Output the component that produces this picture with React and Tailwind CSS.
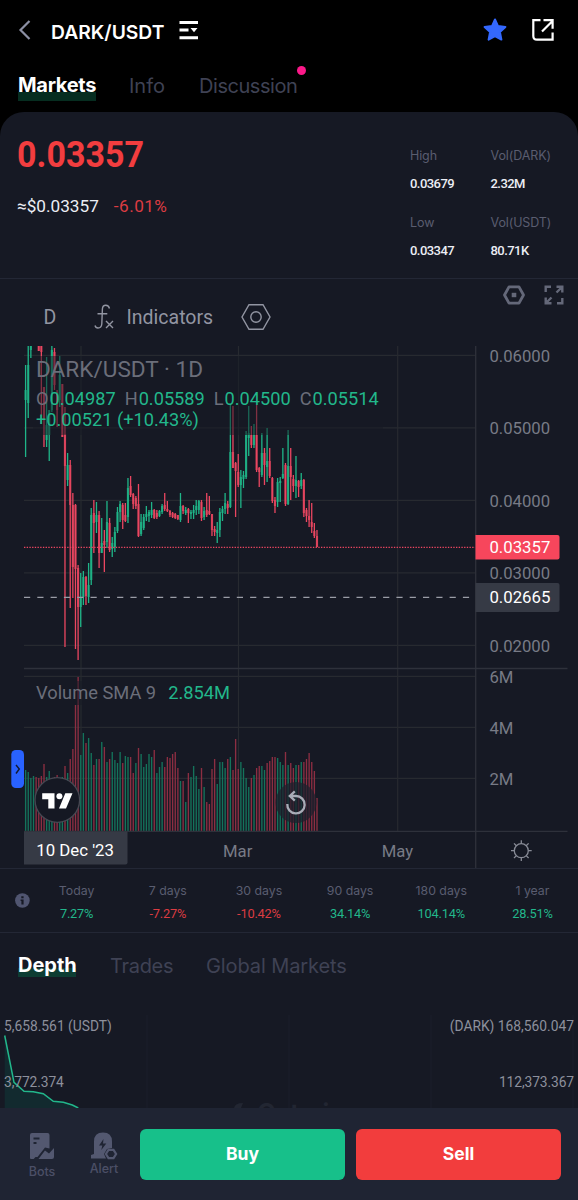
const UP = "#1fb588"
const DOWN = "#ea4660"

// [direction, high, low, body top, body bottom]
const candles = [
  ["u", 365, 457, 390, 400], ["u", 346, 418, 365, 403], ["u", 346, 358, 346, 350], null, null,
  ["d", 346, 351, 346, 351], ["d", 346, 424, 346, 352], ["d", 387, 447, 387, 420], ["u", 357, 447, 425, 440],
  ["u", 410, 461, 410, 435], ["u", 346, 412, 350, 410], ["d", 348, 390, 352, 385], ["d", 390, 427, 392, 410],
  ["u", 356, 407, 375, 400], ["d", 384, 437, 384, 437], ["d", 407, 647, 434, 466], ["u", 453, 486, 465, 480],
  ["d", 460, 608, 465, 505], ["d", 493, 598, 505, 567], ["d", 504, 649, 505, 569], ["d", 565, 660, 568, 607],
  ["u", 573, 627, 597, 607], ["u", 571, 605, 577, 597], ["d", 576, 605, 577, 596], ["u", 563, 603, 585, 597],
  ["u", 508, 585, 515, 580], ["d", 500, 553, 513, 523], ["u", 502, 533, 515, 522], ["d", 511, 568, 515, 553],
  ["u", 518, 553, 543, 553], ["d", 530, 572, 541, 545], ["u", 501, 548, 522, 542], ["d", 518, 552, 523, 550],
  ["u", 537, 557, 543, 549], ["u", 527, 552, 532, 547], ["u", 507, 533, 512, 531], ["u", 501, 522, 504, 512],
  ["d", 503, 529, 505, 520], ["d", 503, 522, 515, 521], ["u", 478, 523, 488, 517], ["d", 476, 497, 486, 495],
  ["d", 493, 509, 494, 504], ["d", 496, 509, 498, 506], ["d", 484, 537, 504, 536], ["u", 514, 536, 522, 534],
  ["u", 514, 530, 517, 528], ["u", 506, 521, 514, 517], ["u", 510, 522, 512, 516], ["u", 502, 518, 510, 515],
  ["d", 509, 519, 510, 518], ["d", 510, 519, 513, 517], ["u", 510, 517, 511, 516], ["u", 504, 514, 506, 512],
  ["d", 493, 511, 505, 509], ["d", 501, 512, 509, 511], ["d", 510, 517, 511, 515], ["d", 512, 518, 513, 517],
  ["d", 513, 519, 514, 518], ["d", 515, 520, 515, 519], ["u", 493, 522, 506, 520], ["d", 505, 514, 506, 511],
  ["u", 507, 515, 510, 513], ["d", 508, 523, 509, 513], ["u", 510, 519, 512, 514], ["u", 505, 519, 510, 513],
  ["u", 500, 515, 506, 510], ["u", 500, 514, 501, 510], ["d", 500, 521, 502, 518], ["u", 507, 520, 511, 517],
  ["d", 493, 517, 510, 515], ["d", 496, 515, 511, 514], ["d", 514, 536, 514, 530], ["d", 526, 536, 529, 532],
  ["u", 522, 543, 530, 533], ["u", 508, 537, 512, 530], ["u", 506, 521, 509, 513], ["u", 493, 514, 503, 509],
  ["d", 501, 514, 504, 508], ["u", 405, 508, 452, 507], ["d", 406, 468, 452, 468], ["d", 462, 517, 463, 471],
  ["d", 454, 487, 472, 485], ["u", 470, 508, 477, 485], ["u", 471, 488, 475, 479], ["u", 431, 479, 435, 477],
  ["u", 406, 456, 433, 438], ["d", 426, 448, 435, 445], ["u", 424, 448, 435, 445], ["d", 405, 472, 435, 470],
  ["d", 467, 487, 468, 472], ["u", 433, 477, 453, 475], ["d", 448, 485, 453, 465], ["u", 428, 482, 461, 467],
  ["d", 448, 478, 461, 476], ["d", 477, 503, 478, 501], ["d", 497, 513, 500, 506], ["u", 478, 507, 482, 502],
  ["u", 477, 502, 481, 483], ["u", 448, 479, 474, 478], ["d", 463, 506, 465, 504], ["u", 430, 505, 466, 504],
  ["d", 448, 500, 466, 477], ["d", 475, 492, 479, 486], ["u", 456, 498, 480, 486], ["d", 480, 497, 481, 487],
  ["u", 473, 489, 480, 486], ["d", 479, 517, 480, 513], ["d", 508, 522, 510, 516], ["d", 500, 527, 516, 520],
  ["d", 503, 533, 522, 527], ["d", 523, 538, 531, 536], ["d", 530, 547, 536, 547],
]

// direction and bar height in pixels
const volumes =
  "u61 u59 u53 u55 d54 d53 d55 d67 u54 u60 u53 d54 d56 u53 u54 d65 u58 d72 d82 d126 d154 u76 u98 d88 u93 u78 d66 u72 d72 u89 d84 u69 d72 u79 u71 u68 u79 d68 u75 u74 d74 d58 u68 d83 u77 u64 u67 u77 u74 d81 u58 u64 u69 d64 d74 d73 d77 d79 d63 u50 d50 u29 d58 u54 u65 u55 u42 d63 u44 d29 d27 d62 d72 u47 u69 u69 u63 d72 u74 d61 d92 d62 u69 u63 u53 u44 d53 u56 d63 d65 u65 u61 d68 d70 d74 d74 u73 u69 u66 d79 u66 d68 d63 u66 d66 u69 d69 d72 d78 d69 d60 d33"
    .split(" ")
    .map((v) => ({ dir: v[0], h: Number(v.slice(1)) }))

const candleX = (i) => 25.6 + i * 2.625

const priceLabels = [
  ["0.06000", 355.5],
  ["0.05000", 428],
  ["0.04000", 500.5],
  ["0.03000", 573],
  ["0.02000", 645.5],
]
const volumeLabels = [
  ["6M", 676.5],
  ["4M", 727.5],
  ["2M", 778.5],
]

const stats = [
  ["High", "0.03679"],
  ["Vol(DARK)", "2.32M"],
  ["Low", "0.03347"],
  ["Vol(USDT)", "80.71K"],
]

const periods = [
  ["Today", "7.27%"],
  ["7 days", "-7.27%"],
  ["30 days", "-10.42%"],
  ["90 days", "34.14%"],
  ["180 days", "104.14%"],
  ["1 year", "28.51%"],
]

function Header() {
  return (
    <header className="flex h-[60px] items-center pt-[4px] pl-[18px] pr-[22px]">
      <svg width="14" height="22" viewBox="0 0 14 22" fill="none" className="-mt-1">
        <path d="M11.5 2 2.5 11l9 9" stroke="#8b8fa3" strokeWidth="2.2" />
      </svg>
      <h1 className="ml-[19px] w-[114px] whitespace-nowrap text-[19.3px] font-semibold text-white">DARK/USDT</h1>
      <svg width="20" height="20" viewBox="0 0 20 20" fill="#fff" className="ml-[14px] -mt-1">
        <path d="M.5 1H19v3H.5zM.5 8.6h9v3h-9zM.5 16.2H19v3H.5zM11.5 8h7L15 12.2z" />
      </svg>
      <svg width="26" height="26" viewBox="0 0 26 26" className="ml-auto -mt-1">
        <path
          d="m13 2.5 3 6.6 7.4.9-5.5 5 1.5 7.6L13 19.1l-6.4 3.5L8.1 15 2.6 10l7.4-.9z"
          fill="#3468fd"
          stroke="#3468fd"
          strokeWidth="2"
          strokeLinejoin="round"
        />
      </svg>
      <svg width="24" height="24" viewBox="0 0 24 24" fill="none" stroke="#fff" strokeWidth="2.2" className="ml-[23px] mr-px -mt-1">
        <path d="M9.5 2.2H2.3V18q0 3.700 3.700 3.700h15.600V14.500M11 13.500 21 3.500M12.500 2.200h9.100v8.600" />
      </svg>
    </header>
  )
}

function TopTabs() {
  return (
    <nav className="flex h-[52px] items-center pl-[18px] text-[20px] whitespace-nowrap">
      <span className="h-[30px] w-[78px] bg-[linear-gradient(transparent_21px,#062d20_21px)] leading-[28px] font-bold tracking-[-0.3px] text-white">
        Markets
      </span>
      <span className="ml-[33px] w-9 text-[#3f4254]">Info</span>
      <span className="relative ml-[34px] tracking-[-0.45px] text-[#3f4254]">
        Discussion
        <i className="absolute -right-[9px] -top-[5px] size-[9px] rounded-full bg-[#fb1989]" />
      </span>
    </nav>
  )
}

function PriceSummary() {
  return (
    <section className="flex h-[167px] justify-between border-b border-[#232735] pl-[17px]">
      <div className="pt-[22px] font-[Roboto]">
        <div className="w-fit origin-left scale-x-[0.92] text-[37px] font-bold leading-[42px] text-[#f23d3f]">0.03357</div>
        <div className="mt-[19px] flex gap-[15px] text-[17.2px] leading-[22px]">
          <span className="text-[#eceef5]">≈$0.03357</span>
          <span className="tracking-[0.45px] text-[#dc3c42]">-6.01%</span>
        </div>
      </div>
      <div className="grid h-[130px] w-[168px] grid-cols-[80.5px_87.5px] gap-y-[11px] pt-[34px]">
        {stats.map(([label, value]) => (
          <div key={label} className="h-[56px]">
            <div className="text-[12.5px] leading-[20px] tracking-[-0.1px] text-[#5a5d70]">{label}</div>
            <div className="mt-2 font-[Roboto] text-[13px] leading-[20px] font-medium tracking-[-0.55px] text-[#eceef5]">{value}</div>
          </div>
        ))}
      </div>
    </section>
  )
}

function ChartToolbar() {
  return (
    <div className="flex h-[67px] items-start pl-[43.5px] pr-[14px] font-[Roboto] text-[19.5px] text-[#9295a2]">
      <span className="mt-[27px] w-[50px] leading-[24px]">D</span>
      <svg width="22" height="28" viewBox="0 0 22 28" fill="none" stroke="#9295a2" strokeWidth="1.4" className="mt-[25px]">
        <path d="M15.5 4.5Q14.8 1.2 11.8 1.2 8.6 1.2 8.4 5L7.8 20Q7.4 24 4 24 1.6 24 1 21.5M3.5 9.8h9.8M12 17l7 7M19 17l-7 7" />
      </svg>
      <span className="ml-[11px] mt-[27px] w-[87px] leading-[24px]">Indicators</span>
      <svg width="30" height="28" viewBox="0 0 30 28" fill="none" stroke="#9295a2" strokeWidth="1.4" className="ml-[27px] mt-[24px]">
        <path d="M8 1.7h14L29 14l-7 12.3H8L1 14z" />
        <circle cx="15" cy="14" r="5.2" />
      </svg>
      <svg width="22" height="20" viewBox="0 0 22 20" fill="none" stroke="#646879" strokeWidth="2.8" strokeLinejoin="round" className="ml-auto mt-[6px]">
        <path d="M6 1.8h10l4.500 8.200-4.500 8.200H6L1.500 10z" />
        <path d="M8.700 7.800h4.600v4.400H8.700z" fill="#646879" stroke="none" />
      </svg>
      <svg width="20" height="20" viewBox="0 0 20 20" fill="none" stroke="#646879" strokeWidth="2.4" className="ml-[19.5px] mt-[6px]">
        <path d="M1.7 7V1.7H7M18.3 13v5.3H13M12.5 1.7h5.8v5.8M18 2l-5.5 5.5M7.5 18.3H1.7v-5.8M2 18l5.5-5.5" />
      </svg>
    </div>
  )
}

function Chart() {
  return (
    <div className="relative h-[523px] border-b border-[#232735] font-[Roboto]">
      <svg width="578" height="522" viewBox="0 346 578 522" className="block">
        <g stroke="#272a30" strokeWidth="1.2">
          {[...priceLabels, ...volumeLabels].map(([label, y]) => (
            <line key={label} x1="24" x2="475" y1={y - 0.2} y2={y - 0.2} />
          ))}
          {[81, 238.5, 397.7].map((x) => (
            <line key={x} x1={x} x2={x} y1="346" y2="831" />
          ))}
        </g>

        {volumes.map((v, i) => (
          <rect
            key={i}
            x={candleX(i) - 0.65}
            y={831 - v.h}
            width="1.35"
            height={v.h}
            fill={v.dir === "u" ? "#14735b" : "#8c2e42"}
          />
        ))}

        {candles.map(
          (c, i) =>
            c && (
              <g key={i} fill={c[0] === "u" ? UP : DOWN}>
                <rect x={candleX(i) - 0.65} y={c[1]} width="1.3" height={c[2] - c[1]} />
                <rect x={candleX(i) - 1.1} y={c[3]} width="2.2" height={c[4] - c[3]} fillOpacity="0.8" />
              </g>
            ),
        )}

        <path d="M24 547.3h451" stroke={DOWN} strokeWidth="1.2" strokeDasharray="1.35 1.35" />
        <path d="M24 597.3h451" stroke="#9a9da6" strokeWidth="1.2" strokeDasharray="6.2 7.1" />
        <path d="M24 668.5h543.5M24 831.3h543.5M475.7 346v522" stroke="#2e313b" strokeWidth="1.3" />

        <g fontSize="16.7" fill="#787b86">
          {[...priceLabels, ...volumeLabels].map(([label, y]) => (
            <text key={label} x="489.4" y={y + 6}>{label}</text>
          ))}
          <text x="223" y="857">Mar</text>
          <text x="381.8" y="857">May</text>
        </g>

        <path d="M475.5 535h82q2 0 2 2v20.5q0 2-2 2h-82z" fill="#f7465c" />
        <path d="M475.5 583h82q2 0 2 2v25q0 2-2 2h-82z" fill="#363a45" />
        <path d="M24 831.5h103.500v31q0 2-2 2H24z" fill="#363a45" />
        <g fontSize="16.8" fill="#fff">
          <text x="489.4" y="553.3">0.03357</text>
          <text x="489.4" y="603.4">0.02665</text>
          <text x="36.3" y="856.4">10 Dec '23</text>
        </g>

        <g stroke="#888b96" strokeWidth="1.3" fill="none">
          <circle cx="521.3" cy="850.7" r="7" />
          <path d="M521.3 840.3v3.4M521.3 857.7v3.4M511 850.7h3.4M528.3 850.7h3.4M514 843.4l2.4 2.4M526.2 855.6l2.4 2.4M528.6 843.4l-2.4 2.4M516.4 855.6l-2.4 2.4" />
        </g>

        {/* TradingView badge */}
        <circle cx="57.3" cy="800" r="22.3" fill="#151823" stroke="#454852" strokeWidth="1.3" />
        <g fill="#fff">
          <path d="M42.2 793.2h12.3v15.2h-6.2v-9.2h-6.1zM65.3 793.2h7.2l-6.5 15.2h-7z" />
          <circle cx="59.4" cy="796.2" r="3" />
        </g>

        {/* reset zoom */}
        <circle cx="296" cy="802.5" r="20.5" fill="#1e202c" fillOpacity="0.75" />
        <path
          d="M287.3 804a8.7 8.7 0 1 0 8.7-8h-6.5M294.8 791.3l-5 4.7 5 4.7"
          fill="none"
          stroke="#a9acb7"
          strokeWidth="2.3"
        />

        <rect x="11.3" y="750" width="12.7" height="38" rx="4.5" fill="#2962ff" />
        <path d="m16 765 3.3 4-3.3 4.5" fill="none" stroke="#131a33" strokeWidth="1.4" />
      </svg>

      <div className="absolute left-[33px] top-[10px] w-[350px] bg-[#161924]/50 pl-[3px] whitespace-nowrap">
        <div className="h-[32px] text-[22.6px] leading-[28px] text-[#6b6e7a]">DARK/USDT · 1D</div>
        <div className="flex h-[21px] gap-[9px] text-[18.2px] leading-[22px] text-[#6b6e7a]">
          <span>O<b className="ml-[1px] font-normal text-[#22b78b]">0.04987</b></span>
          <span>H<b className="ml-[1px] font-normal text-[#22b78b]">0.05589</b></span>
          <span>L<b className="ml-[1px] font-normal text-[#22b78b]">0.04500</b></span>
          <span>C<b className="ml-[1px] font-normal text-[#22b78b]">0.05514</b></span>
        </div>
        <div className="h-[26px] text-[18.2px] leading-[22px] text-[#22b78b]">+0.00521 (+10.43%)</div>
      </div>
      <div className="absolute left-[33px] top-[335px] flex gap-3 bg-[#161924]/50 pl-[3px] text-[18.3px] leading-[24px] text-[#6b6e7a] whitespace-nowrap">
        Volume SMA 9 <span className="text-[#22b78b]">2.854M</span>
      </div>
    </div>
  )
}

function Periods() {
  return (
    <section className="flex h-[64px] border-b border-[#232735]">
      <div className="w-[31px] pl-[15px] pt-[24px]">
        <svg width="15" height="15" viewBox="0 0 15 15">
          <circle cx="7.4" cy="7.5" r="7.3" fill="#505570" />
          <path d="M6.3 3.2h2.3v2H6.3zM5.6 6.4h3v5H6.4V8h-.8z" fill="#161924" />
        </svg>
      </div>
      {periods.map(([label, value]) => (
        <div key={label} className="w-[91.2px] pt-[12px] text-center">
          <div className="text-[12.3px] leading-[20px] text-[#5a5d70]">{label}</div>
          <div
            className={`mt-[3px] font-[Roboto] text-[12.8px] leading-[20px] tracking-[-0.2px] ${
              value[0] === "-" ? "text-[#dc3c42]" : "text-[#22b78b]"
            }`}
          >
            {value}
          </div>
        </div>
      ))}
    </section>
  )
}

function Depth() {
  return (
    <section>
      <nav className="flex h-[64px] items-center pt-[2px] pl-[18px] text-[20px] whitespace-nowrap text-[#3f4254]">
        <span className="h-[30px] w-[58px] bg-[linear-gradient(transparent_17px,#0d3d33_17px,#0d3d33_26px,transparent_26px)] leading-[29px] font-bold text-white">
          Depth
        </span>
        <span className="ml-[34px] w-[62px] tracking-[-0.3px]">Trades</span>
        <span className="ml-[34px] tracking-[-0.1px]">Global Markets</span>
      </nav>
      <div className="relative h-[111px] overflow-hidden">
        <svg width="578" height="111" viewBox="0 997 578 111" className="block">
          <path d="M147 1015v93M289 1015v93M431 1015v93M573 1015v93" stroke="#1b1f2a" />
          <path d="m4.7 1035.5 9.3 46.8 10 9 9.3.4 10 2 10 7.6 10 1 9 2.7 6 3H4.7z" fill="#122a2f" />
          <path
            d="m4.7 1035.5 9.3 46.8 10 9 9.3.4 10 2 10 7.6 10 1 9 2.7 6 3"
            fill="none"
            stroke="#22b78b"
            strokeWidth="1.5"
          />
          <path d="M234 1108q1-5 9-5l-2 5z" fill="#222632" />
        </svg>
        <span className="absolute left-[257px] top-[101px] text-[25px] leading-[30px] font-bold text-[#222632]">Gate.io</span>
        <div className="absolute inset-x-0 top-[19px] pl-[4px] pr-[4px] font-[Roboto] text-[13.8px] leading-[20px] text-[#8d909c]">
          <div className="flex justify-between">
            <span>5,658.561 (USDT)</span>
            <span>(DARK) 168,560.047</span>
          </div>
          <div className="mt-[36px] flex justify-between tracking-[-0.1px]">
            <span>3,772.374</span>
            <span>112,373.367</span>
          </div>
        </div>
      </div>
    </section>
  )
}

function BottomBar() {
  return (
    <footer className="flex h-[92px] bg-[#1f2433] text-[12.5px] font-medium text-[#4b4f66]">
      <div className="ml-[22px] flex w-[40px] flex-col items-center pt-[25px]">
        <svg width="26" height="27" viewBox="0 0 26 27" fill="#535870">
          <path d="M3 0h15.5q2 0 2 2v13.5l-4.5-1L8.5 24H6.5L4.7 26H2q-1 0-1-1V2Q1 0 3 0z" />
          <path d="M9.5 26 16 17.5l4 3L25 15v9q0 2-2 2z" />
          <path d="M4.5 4.5h6v2h-6zM4.5 9h3v2h-3z" fill="#1f2433" />
        </svg>
        <span className="mt-[3px] leading-[18px]">Bots</span>
      </div>
      <div className="ml-[22px] flex w-[40px] flex-col items-center pt-[24px]">
        <svg width="28" height="28" viewBox="0 0 28 28" fill="#535870">
          <path d="M4 22V9.5Q4 .5 13 .5t9 9V16l-5 1-3 5 2 4.5H1V23z" />
          <path d="m13.5 7-4.5 6.5h3.3l-1 4.5 5-6.5h-3.3z" fill="#1f2433" />
          <path d="M18.5 17.8h5l2.6 4.2-2.6 4.2h-5L15.900 22z" fill="#1f2433" stroke="#535870" strokeWidth="2.2" />
        </svg>
        <span className="leading-[18px]">Alert</span>
      </div>
      <button className="ml-[16px] mt-[21px] h-[51px] w-[205px] rounded-[6px] bg-[#17c08a] text-[17.5px] font-bold text-white">Buy</button>
      <button className="ml-[11px] mt-[21px] h-[51px] w-[205px] rounded-[6px] bg-[#f23d3d] text-[17.5px] font-bold text-white">Sell</button>
    </footer>
  )
}

export default function App() {
  return (
    <div className="h-[1200px] w-[578px] overflow-hidden bg-black font-[Inter,sans-serif]">
      <Header />
      <TopTabs />
      <main className="rounded-t-[24px] bg-[#161924]">
        <PriceSummary />
        <ChartToolbar />
        <Chart />
        <Periods />
        <Depth />
      </main>
      <BottomBar />
    </div>
  )
}
